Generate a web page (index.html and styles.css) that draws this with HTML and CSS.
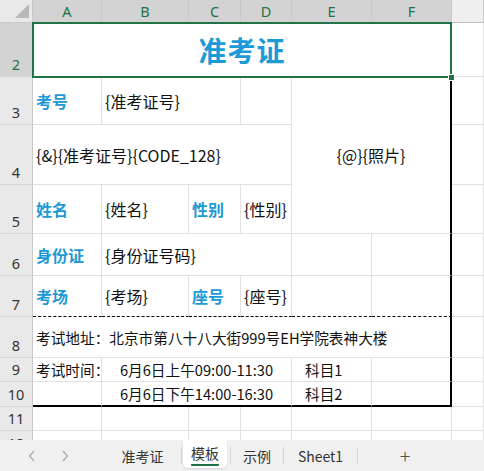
FILE: index.html
```html
<!DOCTYPE html>
<html lang="zh-CN">
<head>
    <meta charset="UTF-8">
    <meta name="viewport" content="width=device-width, initial-scale=1.0">
    <title>准考证 - 模板</title>
    <link rel="stylesheet" href="styles.css">
</head>
<body>
    <div class="sheet">
        <div class="grid">
            <!-- column headers -->
            <div class="corner"><span class="tri"></span></div>
            <div class="colhead on">A</div>
            <div class="colhead on">B</div>
            <div class="colhead on">C</div>
            <div class="colhead on">D</div>
            <div class="colhead on">E</div>
            <div class="colhead on">F</div>
            <div class="colhead"></div>

            <!-- row 2 -->
            <div class="rowhead on">2</div>
            <div class="cell title span6">准考证</div>
            <div class="cell"></div>

            <!-- row 3 -->
            <div class="rowhead">3</div>
            <div class="cell label">考号</div>
            <div class="cell big span2">{准考证号}</div>
            <div class="cell"></div>
            <div class="cell big photo span2 edge">{@}{照片}</div>
            <div class="cell"></div>

            <!-- row 4 -->
            <div class="rowhead">4</div>
            <div class="cell big span4">{&amp;}{准考证号}{CODE_128}</div>
            <div class="cell"></div>

            <!-- row 5 -->
            <div class="rowhead">5</div>
            <div class="cell label">姓名</div>
            <div class="cell big">{姓名}</div>
            <div class="cell label">性别</div>
            <div class="cell big">{性别}</div>
            <div class="cell"></div>

            <!-- row 6 -->
            <div class="rowhead">6</div>
            <div class="cell label">身份证</div>
            <div class="cell big span3">{身份证号码}</div>
            <div class="cell"></div>
            <div class="cell edge"></div>
            <div class="cell"></div>

            <!-- row 7 -->
            <div class="rowhead">7</div>
            <div class="cell label dot">考场</div>
            <div class="cell big dot">{考场}</div>
            <div class="cell label dot">座号</div>
            <div class="cell big dot">{座号}</div>
            <div class="cell dot"></div>
            <div class="cell dot edge"></div>
            <div class="cell"></div>

            <!-- row 8 -->
            <div class="rowhead">8</div>
            <div class="cell span6 edge">考试地址：北京市第八十八大街999号EH学院表神大楼</div>
            <div class="cell"></div>

            <!-- row 9 -->
            <div class="rowhead">9</div>
            <div class="cell">考试时间：</div>
            <div class="cell span3 center">6月6日上午09:00-11:30</div>
            <div class="cell indent">科目1</div>
            <div class="cell edge"></div>
            <div class="cell"></div>

            <!-- row 10 -->
            <div class="rowhead">10</div>
            <div class="cell low"></div>
            <div class="cell span3 center low">6月6日下午14:00-16:30</div>
            <div class="cell indent low">科目2</div>
            <div class="cell edge low"></div>
            <div class="cell"></div>

            <!-- row 11 -->
            <div class="rowhead">11</div>
            <div class="cell"></div>
            <div class="cell"></div>
            <div class="cell"></div>
            <div class="cell"></div>
            <div class="cell"></div>
            <div class="cell"></div>
            <div class="cell"></div>

            <!-- row 12 -->
            <div class="rowhead">12</div>
            <div class="cell"></div>
            <div class="cell"></div>
            <div class="cell"></div>
            <div class="cell"></div>
            <div class="cell"></div>
            <div class="cell"></div>
            <div class="cell"></div>
        </div>

        <!-- selected range A2:F2 -->
        <div class="selection"><span class="handle"></span></div>
    </div>

    <div class="tabs">
        <div class="nav">
            <svg width="8" height="12" viewBox="0 0 8 12"><polyline points="6,1 1.5,6 6,11" fill="none" stroke="#a8a8a8" stroke-width="1.2"/></svg>
            <svg width="8" height="12" viewBox="0 0 8 12"><polyline points="2,1 6.5,6 2,11" fill="none" stroke="#a8a8a8" stroke-width="1.2"/></svg>
        </div>
        <div class="tab first">准考证</div>
        <span class="sep"></span>
        <div class="tab active"><span>模板</span></div>
        <span class="sep"></span>
        <div class="tab mid">示例</div>
        <span class="sep"></span>
        <div class="tab wide">Sheet1</div>
        <span class="sep"></span>
        <div class="add">+</div>
    </div>
</body>
</html>
```

FILE: styles.css
```css
:root {
    --grid: #e1e1e1;
    --head: #e9e9e9;
    --head-on: #d3d3d3;
    --head-line: #c9c9c9;
    --green: #217346;
    --blue: #1c9ad6;
    --text: #111111;
}

* {
    margin: 0;
    padding: 0;
    box-sizing: border-box;
}

body {
    width: 484px;
    height: 471px;
    overflow: hidden;
    background: #ffffff;
    font-family: "Noto Sans CJK SC", "Noto Sans", sans-serif;
    color: var(--text);
}

.sheet {
    position: relative;
    height: 440px;
    overflow: hidden;
}

.grid {
    display: grid;
    grid-template-columns: 33px 69px 87px 52px 51px 80px 80px 1fr;
    grid-template-rows: 23px 54px 48px 60px 49px 42px 41px 41px 24px 25px 24px 25px;
}

/* headers */

.corner {
    background: var(--head);
    border-right: 1px solid var(--head-line);
    border-bottom: 1px solid var(--head-line);
    display: flex;
    justify-content: flex-end;
    align-items: flex-end;
    padding: 0 3px 4px 0;
}

.tri {
    width: 0;
    height: 0;
    border-left: 14px solid transparent;
    border-bottom: 14px solid #b8b8b8;
}

.colhead {
    background: #efefef;
    border-right: 1px solid var(--head-line);
    border-bottom: 1px solid #bfbfbf;
    font-family: "Noto Sans", sans-serif;
    font-size: 14.5px;
    color: #444444;
    display: flex;
    justify-content: center;
    align-items: center;
}

.rowhead {
    background: var(--head);
    border-right: 1px solid var(--head-line);
    border-bottom: 1px solid #d6d6d6;
    font-family: "Noto Sans", sans-serif;
    font-size: 14.5px;
    line-height: 18px;
    color: #333333;
    display: flex;
    justify-content: center;
    align-items: flex-end;
    padding-bottom: 3px;
}

.colhead.on,
.rowhead.on {
    background: var(--head-on);
    color: var(--green);
}

/* cells */

.cell {
    border-right: 1px solid var(--grid);
    border-bottom: 1px solid var(--grid);
    display: flex;
    align-items: center;
    padding: 0 3px;
    font-size: 14.67px;
    white-space: nowrap;
}

.span2 { grid-column: span 2; }
.span3 { grid-column: span 3; }
.span4 { grid-column: span 4; }
.span6 { grid-column: span 6; }

.title {
    justify-content: center;
    font-size: 28px;
    font-weight: 700;
    color: var(--blue);
    letter-spacing: 1px;
}

.label {
    font-size: 16px;
    font-weight: 700;
    color: var(--blue);
}

.big {
    font-size: 16px;
}

.photo {
    grid-row: span 3;
    justify-content: center;
}

.center {
    justify-content: center;
}

.indent {
    padding-left: 13px;
}

.edge {
    border-right: 2px solid #000000;
}

.low {
    border-bottom: 2px solid #000000;
}

.dot {
    border-bottom: 1px dashed #000000;
}

/* selected range */

.selection {
    position: absolute;
    left: 32px;
    top: 22px;
    width: 420px;
    height: 56px;
    border: 2px solid var(--green);
}

.handle {
    position: absolute;
    right: -5px;
    bottom: -5px;
    width: 7px;
    height: 7px;
    background: var(--green);
    border: 1px solid #ffffff;
}

/* sheet tabs */

.tabs {
    height: 31px;
    background: #f0f0f0;
    display: flex;
    align-items: center;
    font-size: 14px;
    color: #333333;
}

.nav {
    width: 104px;
    display: flex;
    align-items: center;
    gap: 25px;
    padding-left: 28px;
}

.tab {
    text-align: center;
    line-height: 20px;
}

.first { width: 77px; }
.mid { width: 52px; }
.wide { width: 73px; }

.sep {
    width: 1px;
    height: 17px;
    background: #d4d4d4;
}

.active {
    align-self: flex-start;
    width: 44px;
    height: 28px;
    margin: 0 3px 0 1px;
    background: #ffffff;
    border-radius: 0 0 5px 5px;
    box-shadow: 0 1px 2px rgba(0, 0, 0, 0.12);
    padding-top: 3px;
}

.active span {
    display: inline-block;
    line-height: 17px;
    padding-bottom: 2px;
    border-bottom: 2px solid var(--green);
    border-radius: 1px;
}

.add {
    width: 94px;
    text-align: center;
    font-size: 20px;
    font-weight: 300;
    color: #555555;
}
```
